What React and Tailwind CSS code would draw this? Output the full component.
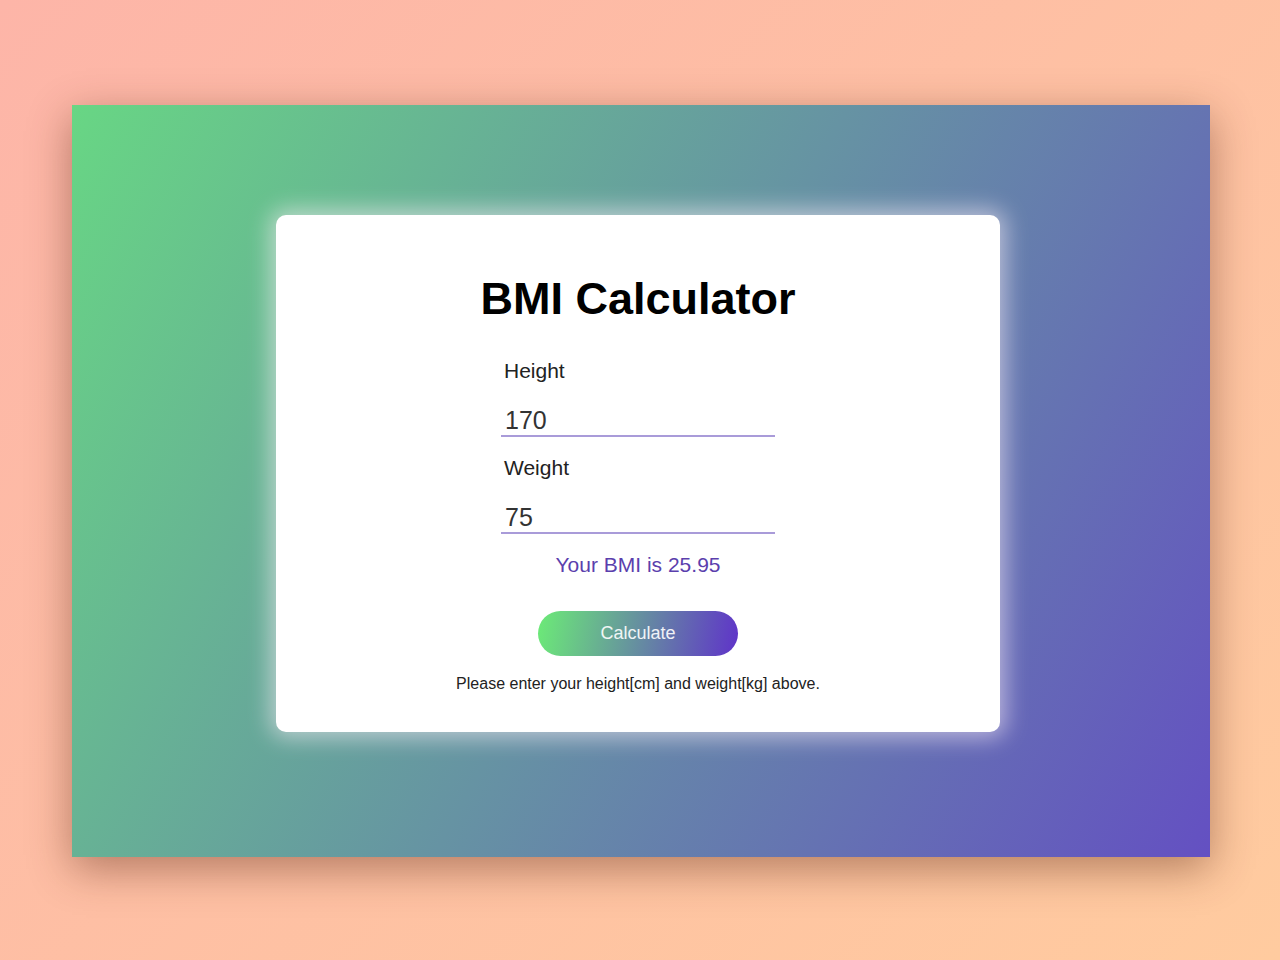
import React, { useState } from 'react';

const App = () => {
  const [height, setHeight] = useState('170');
  const [weight, setWeight] = useState('75');

  const bmi = (Number(weight) / Math.pow(Number(height) / 100, 2)).toFixed(2);

  return (
    <div
      className="min-h-screen w-full pt-[105px] bg-[linear-gradient(135deg,#fdb5a8,#ffcb9f)]"
      style={{ fontFamily: '"Liberation Sans", Arial, sans-serif' }}
    >
      {/* outer gradient frame */}
      <div className="ml-[72px] w-[1138px] h-[752px] pt-[110px] pl-[204px] bg-[linear-gradient(119deg,#68d684,#6450c2)] shadow-[0_12px_40px_rgba(90,40,20,0.45)]">
        {/* card */}
        <div className="w-[724px] h-[517px] bg-white rounded-[10px] shadow-[0_0_22px_6px_rgba(255,240,250,0.55)] flex flex-col items-center pt-[58px]">
          <h1 className="text-[45px] leading-[52px] font-bold text-black">BMI Calculator</h1>

          <div className="w-[274px] mt-[34px]">
            <label className="block pl-[3px] text-[21px] leading-[24px] text-[#222]">Height</label>
            <input
              value={height}
              onChange={(e) => setHeight(e.target.value)}
              className="block w-full mt-[22px] px-[4px] text-[25px] leading-[30px] text-[#333] bg-transparent outline-none border-b-2 border-[#a99bd9]"
            />
            <label className="block pl-[3px] mt-[19px] text-[21px] leading-[24px] text-[#222]">Weight</label>
            <input
              value={weight}
              onChange={(e) => setWeight(e.target.value)}
              className="block w-full mt-[22px] px-[4px] text-[25px] leading-[30px] text-[#333] bg-transparent outline-none border-b-2 border-[#a99bd9]"
            />
          </div>

          <p className="mt-[18px] text-[21px] leading-[26px] text-[#5b3fad]">Your BMI is {bmi}</p>

          <button className="mt-[33px] w-[200px] h-[45px] rounded-full bg-[linear-gradient(100deg,#6ceb77,#5f33c9)] text-[18px] text-white/90">
            Calculate
          </button>

          <p className="mt-[18px] text-[16px] leading-[20px] text-[#222]">
            Please enter your height[cm] and weight[kg] above.
          </p>
        </div>
      </div>
    </div>
  );
};

export default App;
